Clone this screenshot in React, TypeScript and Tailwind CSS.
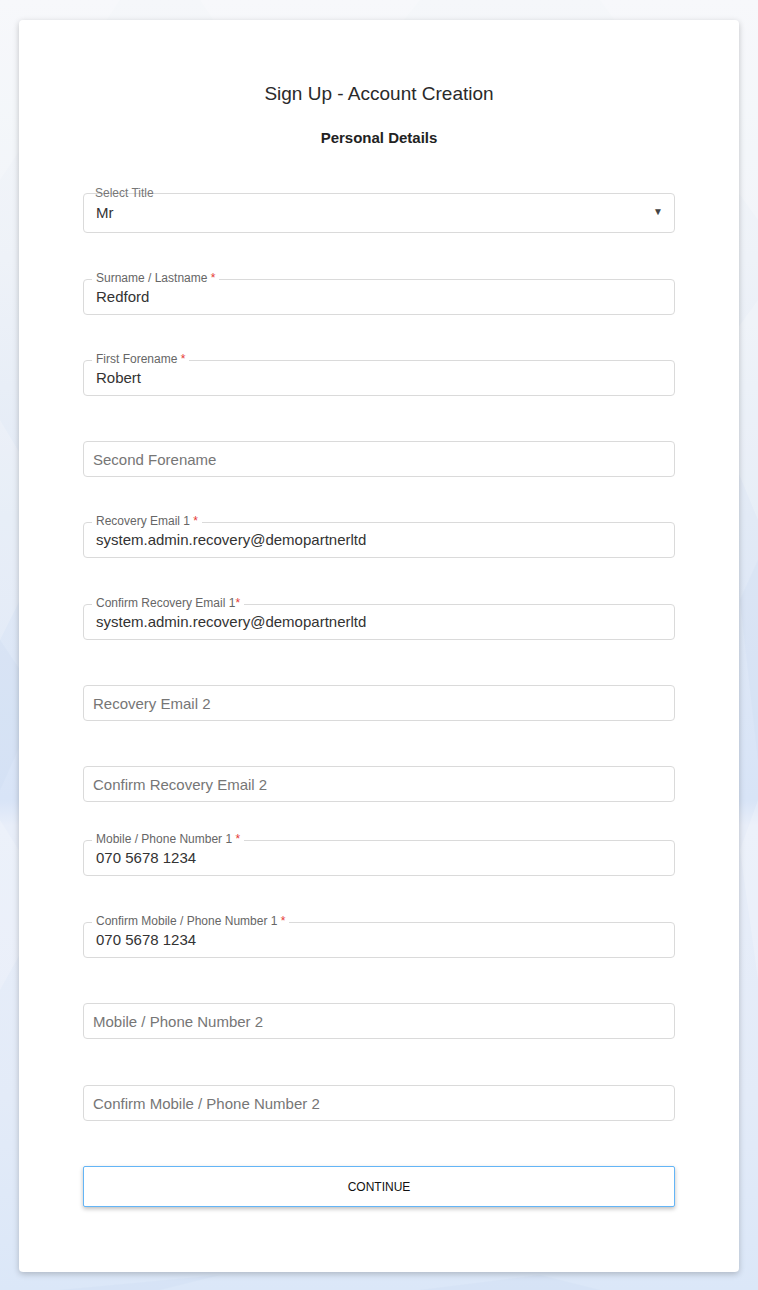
import type { ReactNode } from 'react'

interface FieldProps {
  label?: string
  required?: boolean
  tightStar?: boolean
  value?: string
  placeholder?: string
  className?: string
}

function Field({ label, required, tightStar, value, placeholder, className = '' }: FieldProps) {
  return (
    <div className={`relative h-[36px] rounded-[4px] border border-[#dadada] bg-white ${className}`}>
      {label && (
        <span className="absolute left-[8px] top-[-9px] bg-white px-[4px] text-[12px] leading-[14px] text-[#666]">
          {label}
          {required && <span className="text-[#e53935]">{tightStar ? '*' : ' *'}</span>}
        </span>
      )}
      {value ? (
        <div className="flex h-full items-center pl-[12px] text-[15px] text-[#333]">{value}</div>
      ) : (
        <div className="flex h-full items-center pl-[9px] pt-[3px] text-[15px] text-[#767676]">{placeholder}</div>
      )}
    </div>
  )
}

function Background({ children }: { children: ReactNode }) {
  return (
    <div className="relative min-h-[1290px] bg-[linear-gradient(180deg,#f5f7fa_0%,#eef2f8_20%,#e2eaf6_40%,#d8e4f7_62%,#e8eef9_64%,#e3ebf8_85%,#dbe7f8_100%)]">
      {/* faint triangle pattern */}
      <svg className="pointer-events-none absolute inset-0 h-full w-full opacity-50" preserveAspectRatio="none" viewBox="0 0 758 1290">
        <g fill="#ffffff" fillOpacity="0.4">
          <polygon points="0,0 120,0 0,180" />
          <polygon points="200,0 420,0 300,150" />
          <polygon points="600,0 758,0 758,220" />
          <polygon points="0,420 60,520 0,640" />
          <polygon points="700,380 758,300 758,520" />
          <polygon points="0,820 50,900 0,990" />
          <polygon points="740,850 758,800 758,980" />
        </g>
        <g fill="#c9d9f2" fillOpacity="0.4">
          <polygon points="0,640 40,700 0,790" />
          <polygon points="740,600 758,560 758,760" />
          <polygon points="60,1290 220,1275 160,1290" />
          <polygon points="420,1290 540,1275 600,1290" />
        </g>
      </svg>
      <div className="relative px-[19px] pt-[20px] pb-[18px]">{children}</div>
    </div>
  )
}

export default function App() {
  return (
    <Background>
      <div
        className="h-[1252px] w-[720px] rounded-[4px] bg-white px-[64px] pt-[62px] shadow-[0_2px_6px_rgba(0,0,0,0.22)]"
        style={{ fontFamily: '"Liberation Sans", Arial, sans-serif' }}
      >
        <h1 className="text-center text-[19px] leading-[24px] text-[#2a2a2a]">Sign Up - Account Creation</h1>
        <h2 className="mt-[24px] text-center text-[15px] font-bold leading-[16px] text-[#222]">Personal Details</h2>

        {/* title select */}
        <div className="relative mt-[47px] h-[40px] rounded-[4px] border border-[#dadada]">
          <span className="absolute left-[11px] top-[-8px] text-[12px] leading-[14px] text-[#777]">Select Title</span>
          <div className="flex h-full items-center pl-[12px] text-[15px] text-[#333]">Mr</div>
          <span className="absolute right-[11px] top-[11px] text-[10px] leading-[14px] text-[#444]">▼</span>
        </div>

        <Field className="mt-[46px]" label="Surname / Lastname" required value="Redford" />
        <Field className="mt-[45px]" label="First Forename" required value="Robert" />
        <Field className="mt-[45px]" placeholder="Second Forename" />
        <Field className="mt-[45px]" label="Recovery Email 1" required value="system.admin.recovery@demopartnerltd" />
        <Field className="mt-[46px]" label="Confirm Recovery Email 1" required tightStar value="system.admin.recovery@demopartnerltd" />
        <Field className="mt-[45px]" placeholder="Recovery Email 2" />
        <Field className="mt-[45px]" placeholder="Confirm Recovery Email 2" />
        <Field className="mt-[38px]" label="Mobile / Phone Number 1" required value="070 5678 1234" />
        <Field className="mt-[46px]" label="Confirm Mobile / Phone Number 1" required value="070 5678 1234" />
        <Field className="mt-[45px]" placeholder="Mobile / Phone Number 2" />
        <Field className="mt-[46px]" placeholder="Confirm Mobile / Phone Number 2" />

        <button className="mt-[45px] flex h-[41px] w-full items-center justify-center rounded-[2px] border border-[#64b5f6] bg-white text-[12px] text-[#111] shadow-[0_2px_4px_rgba(0,0,0,0.25)]">
          CONTINUE
        </button>
      </div>
    </Background>
  )
}
